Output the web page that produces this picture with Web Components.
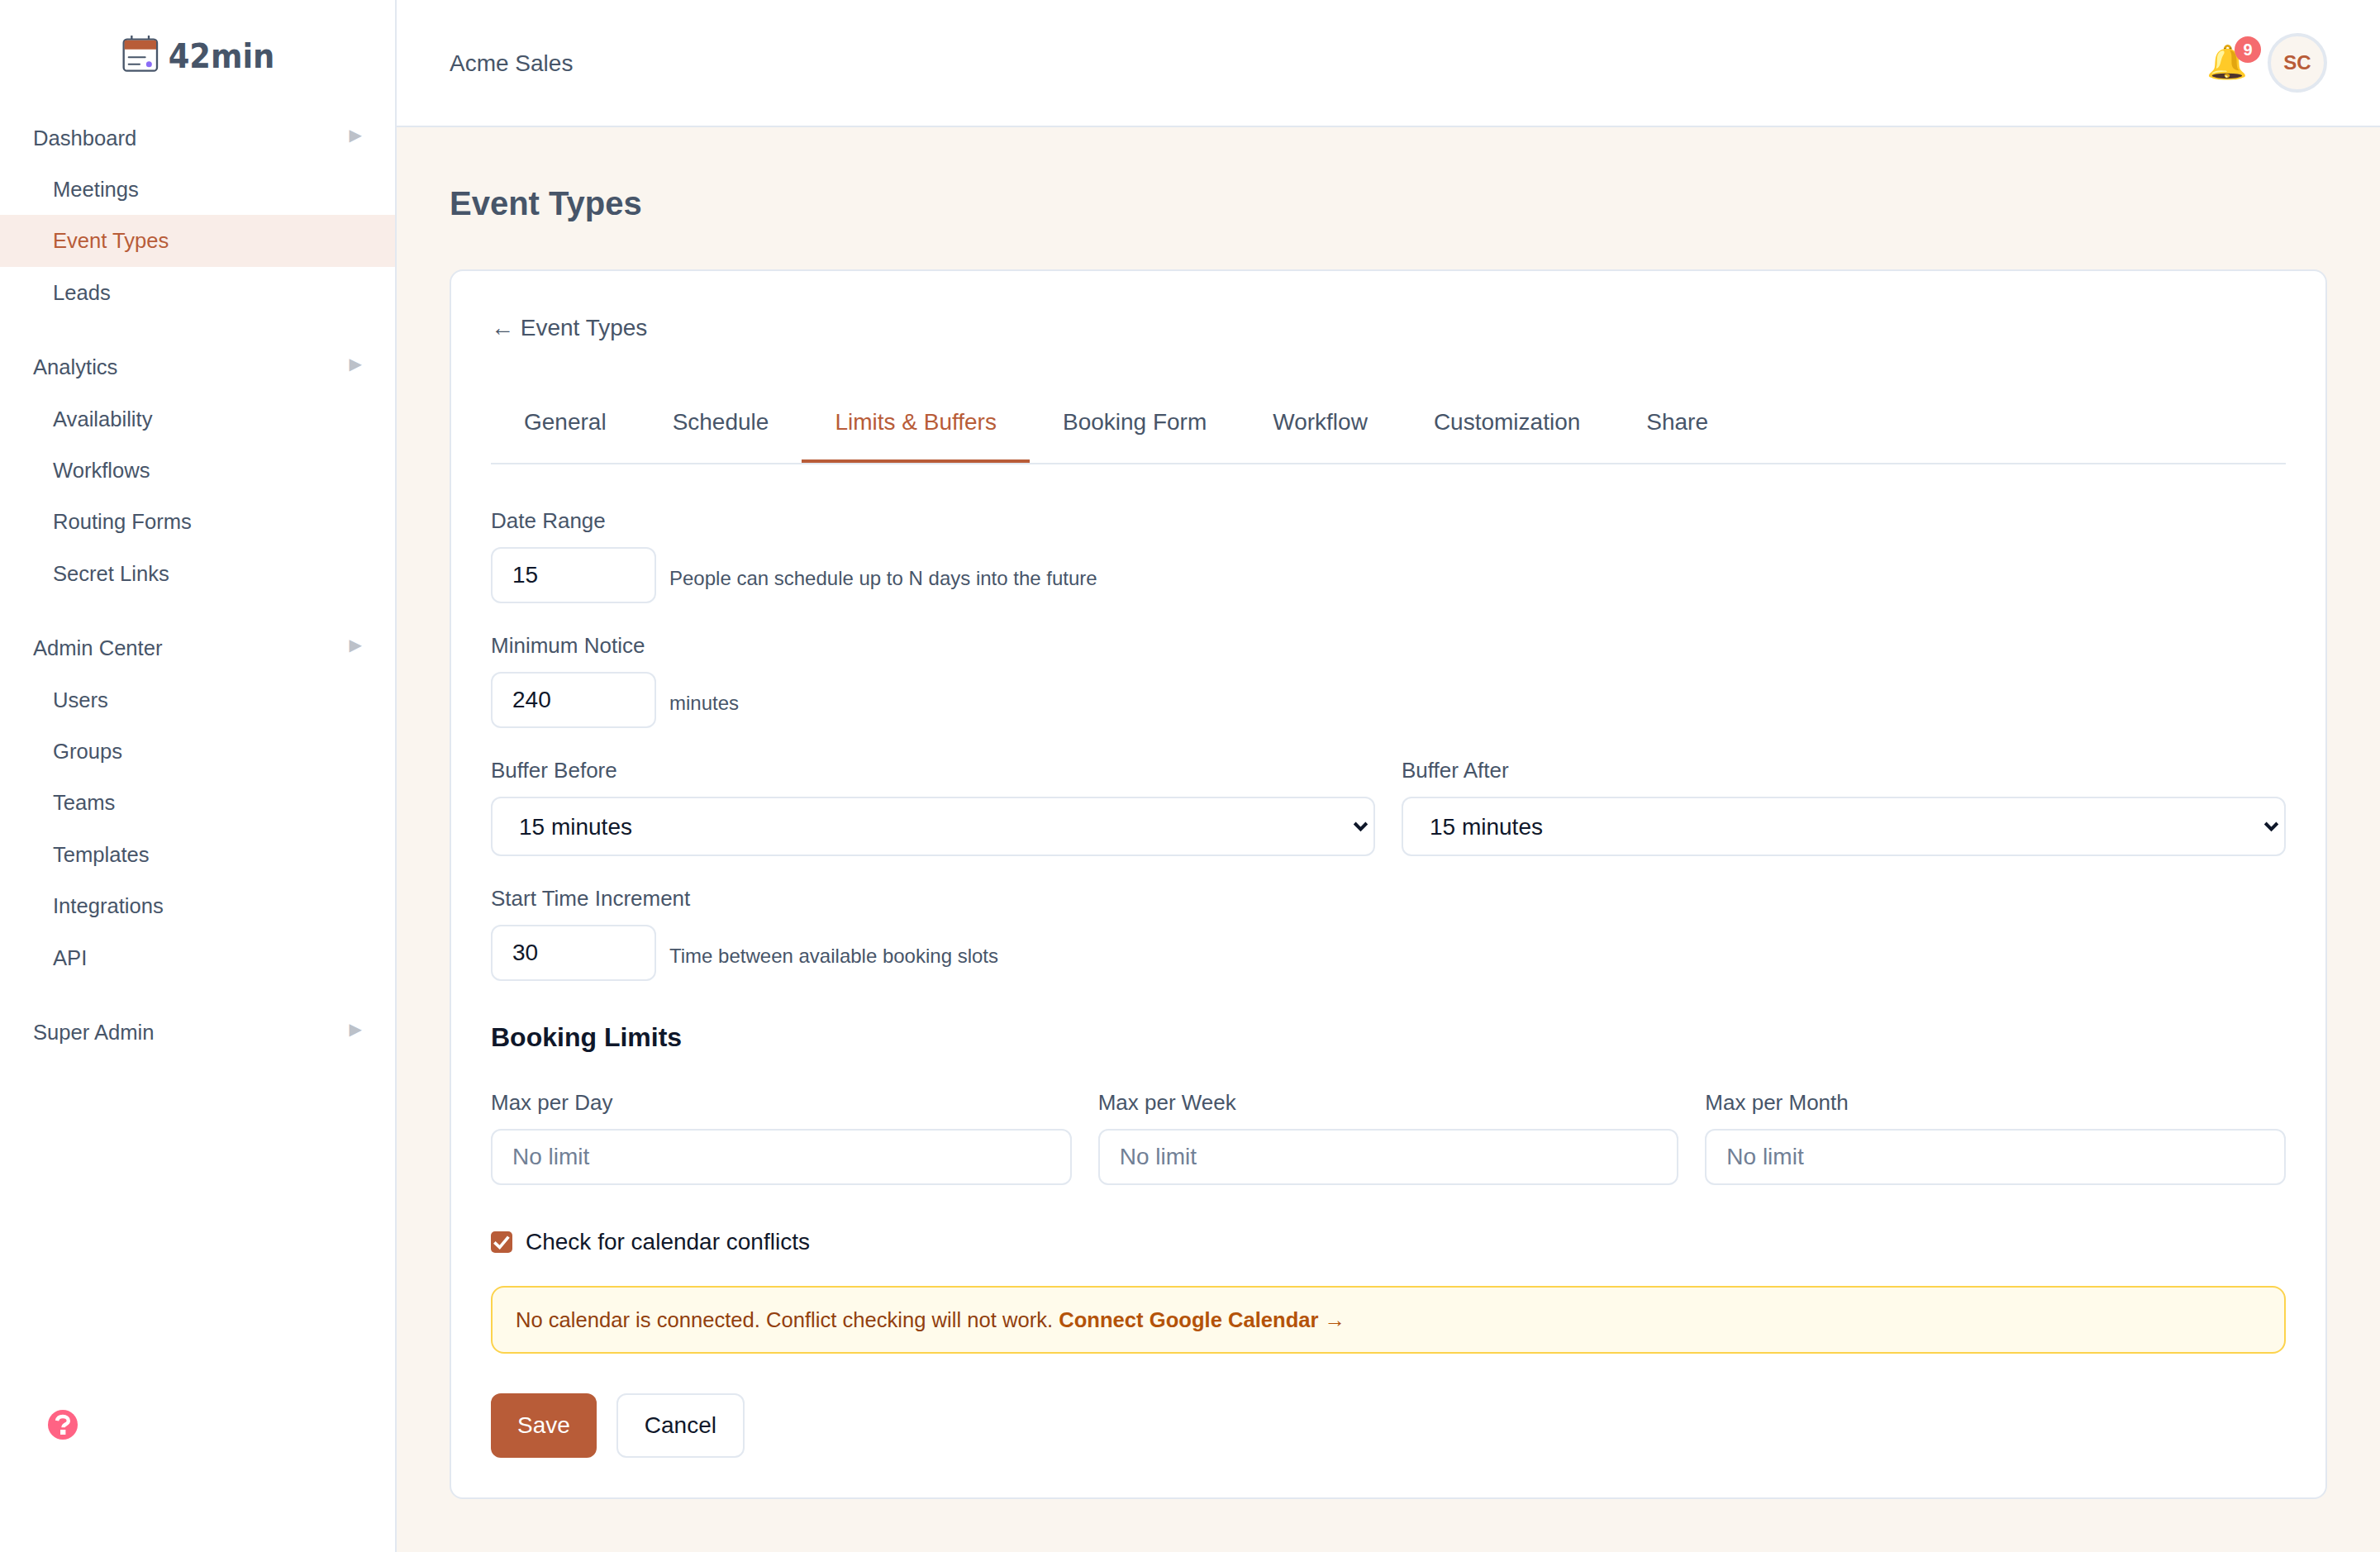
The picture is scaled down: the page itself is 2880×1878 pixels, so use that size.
<!DOCTYPE html>
<html lang="en">
<head>
<meta charset="utf-8">
<title>Event Types</title>
<style>
  html { zoom: 2; }
  body { margin: 0; font-family: "Liberation Sans", Arial, sans-serif; color: #475569; }
</style>
</head>
<body>
<app-shell>
  <side-bar slot="sidebar">
    <nav-group label="Dashboard">
      <nav-item>Meetings</nav-item>
      <nav-item active>Event Types</nav-item>
      <nav-item>Leads</nav-item>
    </nav-group>
    <nav-group label="Analytics">
      <nav-item>Availability</nav-item>
      <nav-item>Workflows</nav-item>
      <nav-item>Routing Forms</nav-item>
      <nav-item>Secret Links</nav-item>
    </nav-group>
    <nav-group label="Admin Center">
      <nav-item>Users</nav-item>
      <nav-item>Groups</nav-item>
      <nav-item>Teams</nav-item>
      <nav-item>Templates</nav-item>
      <nav-item>Integrations</nav-item>
      <nav-item>API</nav-item>
    </nav-group>
    <nav-group label="Super Admin"></nav-group>
  </side-bar>
  <top-bar slot="topbar">Acme Sales</top-bar>
  <page-title>Event Types</page-title>
  <main-card>
    <back-link>Event Types</back-link>
    <tab-bar>
      <tab-item>General</tab-item>
      <tab-item>Schedule</tab-item>
      <tab-item active>Limits &amp; Buffers</tab-item>
      <tab-item>Booking Form</tab-item>
      <tab-item>Workflow</tab-item>
      <tab-item>Customization</tab-item>
      <tab-item>Share</tab-item>
    </tab-bar>
    <form-field label="Date Range"><number-input value="15" hint="People can schedule up to N days into the future"></number-input></form-field>
    <form-field label="Minimum Notice"><number-input value="240" hint="minutes"></number-input></form-field>
    <field-row columns="2">
      <form-field label="Buffer Before"><select-input value="15 minutes"></select-input></form-field>
      <form-field label="Buffer After"><select-input value="15 minutes"></select-input></form-field>
    </field-row>
    <form-field label="Start Time Increment"><number-input value="30" hint="Time between available booking slots"></number-input></form-field>
    <section-title>Booking Limits</section-title>
    <field-row columns="3">
      <form-field label="Max per Day"><number-input placeholder="No limit" wide></number-input></form-field>
      <form-field label="Max per Week"><number-input placeholder="No limit" wide></number-input></form-field>
      <form-field label="Max per Month"><number-input placeholder="No limit" wide></number-input></form-field>
    </field-row>
    <check-row checked>Check for calendar conflicts</check-row>
    <warn-box link="Connect Google Calendar →">No calendar is connected. Conflict checking will not work.</warn-box>
    <button-row>
      <app-button primary>Save</app-button>
      <app-button>Cancel</app-button>
    </button-row>
  </main-card>
</app-shell>

<script>
class AppShell extends HTMLElement {
  constructor() {
    super();
    this.attachShadow({ mode: 'open' }).innerHTML = `
      <style>
        :host { display: flex; width: 1440px; height: 939px; background: #faf5ef; overflow: hidden; }
        .right { flex: 1; min-width: 0; display: flex; flex-direction: column; }
        main { padding: 32px; }
      </style>
      <slot name="sidebar"></slot>
      <div class="right">
        <slot name="topbar"></slot>
        <main><slot></slot></main>
      </div>`;
  }
}
customElements.define('app-shell', AppShell);

class SideBar extends HTMLElement {
  constructor() {
    super();
    this.attachShadow({ mode: 'open' }).innerHTML = `
      <style>
        :host { display: flex; flex-direction: column; width: 240px; box-sizing: border-box; flex: none;
                background: #fff; border-right: 1px solid #e2e8f0; }
        .logo { height: 67.8px; display: flex; justify-content: center; align-items: center; gap: 6px; padding: 0 0 1px 1px; box-sizing: border-box; }
        .logo svg { width: 22px; height: 22px; display: block; margin-top: -2px; }
        .logo span { font: 700 20.5px/1 "DejaVu Sans Condensed", "DejaVu Sans", sans-serif; font-stretch: condensed; color: #475569; margin-top: 2px; }
        nav { display: flex; flex-direction: column; gap: 14px; }
        .help { margin-top: auto; padding: 0 0 68px 29px; }
        .help svg { width: 18px; height: 18px; display: block; }
      </style>
      <div class="logo">
        <svg viewBox="0 0 132 132">
          <path d="M34 2v14M96 2v14" stroke="#475569" stroke-width="7" stroke-linecap="round"/>
          <rect x="5" y="14" width="121" height="114" rx="12" fill="#fff" stroke="#475569" stroke-width="7"/>
          <path d="M8 22a5 5 0 0 1 5-5h105a5 5 0 0 1 5 5v28H8z" fill="#b85c38"/>
          <path d="M23 79h60M23 104h40" stroke="#475569" stroke-width="6" stroke-linecap="round"/>
          <circle cx="97" cy="104" r="10.5" fill="#8b6cf6"/>
        </svg>
        <span>42min</span>
      </div>
      <nav><slot></slot></nav>
      <div class="help">
        <svg viewBox="0 0 36 36">
          <circle cx="18" cy="18" r="18" fill="#ff6384"/>
          <path d="M11 13.2c.6-3.4 3.4-5.2 7-5.2 4 0 6.8 2.2 6.8 5.2 0 4.6-6.3 4-6.3 8" fill="none" stroke="#fff" stroke-width="4.4"/>
          <rect x="15" y="24" width="6.4" height="6" fill="#fff"/>
        </svg>
      </div>`;
  }
}
customElements.define('side-bar', SideBar);

class NavGroup extends HTMLElement {
  constructor() {
    super();
    this.attachShadow({ mode: 'open' }).innerHTML = `
      <style>
        :host { display: block; }
        .head { display: flex; justify-content: space-between; align-items: center; height: 31.2px; padding: 0 20px 0 20px;
                font-size: 12.8px; line-height: 19.2px; color: #475569; }
        .arrow { font: 10px/1 "DejaVu Sans", sans-serif; color: #bcc1c9; position: relative; top: -2px; }
      </style>
      <div class="head"><span class="name"></span><span class="arrow">▶</span></div>
      <slot></slot>`;
  }
  connectedCallback() {
    this.shadowRoot.querySelector('.name').textContent = this.getAttribute('label');
  }
}
customElements.define('nav-group', NavGroup);

class NavItem extends HTMLElement {
  constructor() {
    super();
    this.attachShadow({ mode: 'open' }).innerHTML = `
      <style>
        :host { display: block; padding: 6px 16px 6px 32px; font-size: 12.8px; line-height: 19.2px; color: #475569; }
        :host([active]) { background: #f9ede8; color: #b85c38; }
      </style>
      <slot></slot>`;
  }
}
customElements.define('nav-item', NavItem);

class TopBar extends HTMLElement {
  constructor() {
    super();
    this.attachShadow({ mode: 'open' }).innerHTML = `
      <style>
        :host { display: flex; align-items: center; justify-content: space-between; height: 77px; box-sizing: border-box;
                padding: 0 32px; background: #fff; border-bottom: 1px solid #e2e8f0; font-size: 14px; color: #475569; flex: none; }
        .name { margin-top: 1px; }
        .tools { display: flex; align-items: center; gap: 12px; }
        .bell { position: relative; font: 20px/1 "Noto Color Emoji", sans-serif; }
        .badge { position: absolute; top: -6px; right: -8px; width: 16px; height: 16px; border-radius: 50%;
                 background: #f56b6e; color: #fff; font: 700 10px/16px "Liberation Sans", sans-serif; text-align: center; }
        .avatar { width: 36px; height: 36px; box-sizing: border-box; border: 2px solid #e2e8f0; border-radius: 50%;
                  background: #faf5ef; color: #b85c38; font-size: 12px; font-weight: 700;
                  display: flex; align-items: center; justify-content: center; }
      </style>
      <span class="name"><slot></slot></span>
      <div class="tools">
        <span class="bell">🔔<span class="badge">9</span></span>
        <span class="avatar">SC</span>
      </div>`;
  }
}
customElements.define('top-bar', TopBar);

class PageTitle extends HTMLElement {
  constructor() {
    super();
    this.attachShadow({ mode: 'open' }).innerHTML = `
      <style>:host { display: block; font-size: 20px; line-height: 28px; font-weight: 700; color: #475569; margin-bottom: 26px; }</style>
      <slot></slot>`;
  }
}
customElements.define('page-title', PageTitle);

class MainCard extends HTMLElement {
  constructor() {
    super();
    this.attachShadow({ mode: 'open' }).innerHTML = `
      <style>:host { display: block; background: #fff; border: 1px solid #e2e8f0; border-radius: 8px; padding: 24px; }</style>
      <slot></slot>`;
  }
}
customElements.define('main-card', MainCard);

class BackLink extends HTMLElement {
  constructor() {
    super();
    this.attachShadow({ mode: 'open' }).innerHTML = `
      <style>:host { display: block; font-size: 14px; line-height: 21px; color: #475569; margin-bottom: 24px; }</style>
      ← <slot></slot>`;
  }
}
customElements.define('back-link', BackLink);

class TabBar extends HTMLElement {
  constructor() {
    super();
    this.attachShadow({ mode: 'open' }).innerHTML = `
      <style>:host { display: flex; border-bottom: 1px solid #e2e8f0; margin-bottom: 24.5px; }</style>
      <slot></slot>`;
  }
}
customElements.define('tab-bar', TabBar);

class TabItem extends HTMLElement {
  constructor() {
    super();
    this.attachShadow({ mode: 'open' }).innerHTML = `
      <style>
        :host { display: block; padding: 12px 20px; font-size: 14px; line-height: 21px; color: #475569; border-bottom: 2px solid transparent; }
        :host([active]) { color: #b85c38; border-bottom-color: #b85c38; }
      </style>
      <slot></slot>`;
  }
}
customElements.define('tab-item', TabItem);

class FormField extends HTMLElement {
  constructor() {
    super();
    this.attachShadow({ mode: 'open' }).innerHTML = `
      <style>
        :host { display: block; margin-bottom: 16px; min-width: 0; }
        label { display: block; font-size: 13px; line-height: 19.5px; color: #475569; margin-bottom: 6px; }
      </style>
      <label></label>
      <slot></slot>`;
  }
  connectedCallback() {
    this.shadowRoot.querySelector('label').textContent = this.getAttribute('label');
  }
}
customElements.define('form-field', FormField);

class FieldRow extends HTMLElement {
  constructor() {
    super();
    this.attachShadow({ mode: 'open' }).innerHTML = `
      <style>
        :host { display: grid; column-gap: 16px; }
        :host([columns="2"]) { grid-template-columns: 1fr 1fr; }
        :host([columns="3"]) { grid-template-columns: 1fr 1fr 1fr; }
      </style>
      <slot></slot>`;
  }
}
customElements.define('field-row', FieldRow);

class NumberInput extends HTMLElement {
  constructor() {
    super();
    this.attachShadow({ mode: 'open' }).innerHTML = `
      <style>
        :host { display: flex; align-items: center; gap: 8px; }
        input { width: 100px; height: 34px; box-sizing: border-box; padding: 8px 12px; border: 1px solid #e2e8f0; border-radius: 6px;
                font: 14px "Liberation Sans", sans-serif; color: #0f172a; background: #fff; outline: none; margin: 0; }
        :host([wide]) input { width: 100%; }
        input::placeholder { color: #718096; }
        span { font-size: 12px; color: #475569; margin-top: 3.5px; }
      </style>
      <input type="text"><span></span>`;
  }
  connectedCallback() {
    const input = this.shadowRoot.querySelector('input');
    input.setAttribute('value', this.getAttribute('value') || '');
    input.placeholder = this.getAttribute('placeholder') || '';
    const hint = this.shadowRoot.querySelector('span');
    if (this.hasAttribute('hint')) hint.textContent = this.getAttribute('hint');
    else hint.remove();
  }
}
customElements.define('number-input', NumberInput);

class SelectInput extends HTMLElement {
  constructor() {
    super();
    this.attachShadow({ mode: 'open' }).innerHTML = `
      <style>
        :host { display: block; position: relative; }
        select { display: block; width: 100%; height: 36px; box-sizing: border-box; padding: 8px 24px 8px 16px; border: 1px solid #e2e8f0; border-radius: 6px;
                 font: 14px "Liberation Sans", sans-serif; color: #0f172a; background: #fff; outline: none; margin: 0; appearance: none; }
        svg { position: absolute; right: 4px; top: 14.5px; width: 9.5px; height: 7px; pointer-events: none; }
      </style>
      <select></select>
      <svg viewBox="0 0 19 14"><path d="M2.2 3l7.3 7.3L16.8 3" fill="none" stroke="#0f172a" stroke-width="4"/></svg>`;
  }
  connectedCallback() {
    const option = document.createElement('option');
    option.textContent = this.getAttribute('value');
    this.shadowRoot.querySelector('select').appendChild(option);
  }
}
customElements.define('select-input', SelectInput);

class SectionTitle extends HTMLElement {
  constructor() {
    super();
    this.attachShadow({ mode: 'open' }).innerHTML = `
      <style>:host { display: block; font-size: 16px; line-height: 24px; font-weight: 700; color: #0f172a; margin: 22px 0 18px; }</style>
      <slot></slot>`;
  }
}
customElements.define('section-title', SectionTitle);

class CheckRow extends HTMLElement {
  constructor() {
    super();
    this.attachShadow({ mode: 'open' }).innerHTML = `
      <style>
        :host { display: flex; align-items: center; gap: 8px; font-size: 14px; line-height: 21px; color: #0f172a; margin: 8px 0 16px; }
        .box { position: relative; width: 13px; height: 13px; flex: none; }
        input { display: block; width: 13px; height: 13px; margin: 0; appearance: none; background: #b85c38; border-radius: 2.5px; }
        svg { position: absolute; inset: 0; width: 13px; height: 13px; pointer-events: none; }
      </style>
      <span class="box">
        <input type="checkbox">
        <svg viewBox="0 0 78 78"><path d="M13 40l19 18 32-38" fill="none" stroke="#fff" stroke-width="11"/></svg>
      </span>
      <slot></slot>`;
  }
  connectedCallback() {
    this.shadowRoot.querySelector('input').checked = this.hasAttribute('checked');
  }
}
customElements.define('check-row', CheckRow);

class WarnBox extends HTMLElement {
  constructor() {
    super();
    this.attachShadow({ mode: 'open' }).innerHTML = `
      <style>
        :host { display: block; padding: 10px 14px; background: #fffbeb; border: 1px solid #fcd34d; border-radius: 8px;
                font-size: 12.8px; line-height: 19.2px; color: #92400e; margin-bottom: 24px; }
        b { color: #b45309; }
      </style>
      <slot></slot> <b></b>`;
  }
  connectedCallback() {
    this.shadowRoot.querySelector('b').textContent = this.getAttribute('link');
  }
}
customElements.define('warn-box', WarnBox);

class ButtonRow extends HTMLElement {
  constructor() {
    super();
    this.attachShadow({ mode: 'open' }).innerHTML = `
      <style>:host { display: flex; gap: 12px; }</style>
      <slot></slot>`;
  }
}
customElements.define('button-row', ButtonRow);

class AppButton extends HTMLElement {
  constructor() {
    super();
    this.attachShadow({ mode: 'open' }).innerHTML = `
      <style>
        :host { display: block; padding: 8px 16px; border: 1px solid #e2e8f0; border-radius: 6px; background: #fff;
                font-size: 14px; line-height: 21px; color: #0f172a; }
        :host([primary]) { padding: 9px 16px; border: 0; background: #b85c38; color: #fff; }
      </style>
      <slot></slot>`;
  }
}
customElements.define('app-button', AppButton);
</script>
</body>
</html>
